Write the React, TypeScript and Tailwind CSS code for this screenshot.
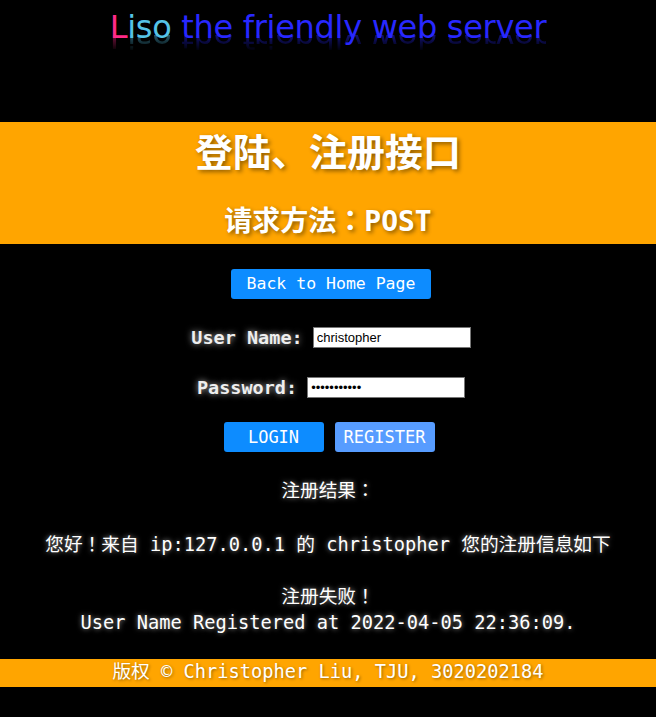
const mono = 'font-["DejaVu_Sans_Mono","Noto_Sans_CJK_JP",monospace]';

function Logo() {
  const text = (
    <>
      <span className="text-[#ff2a88]">L</span>
      <span className="text-[#55c3e6]">iso</span>
      <span className="text-[#2828ff]"> the friendly web server</span>
    </>
  );
  return (
    <div className="flex flex-col items-center pt-[7px] font-['DejaVu_Sans',sans-serif] text-[32px] leading-[40px] tracking-[-0.3px]">
      <div>{text}</div>
      <div
        aria-hidden="true"
        className="-mt-[12px] h-[22px] overflow-hidden -scale-y-100 opacity-45 [mask-image:linear-gradient(to_top,black,transparent_75%)]"
      >
        {text}
      </div>
    </div>
  );
}

export default function App() {
  return (
    <div className={`min-h-[717px] bg-black text-white ${mono}`}>
      <div className="h-[122px]">
        <Logo />
      </div>

      <div className="flex h-[122px] flex-col items-center bg-[#ffa500] font-bold [text-shadow:2px_2px_4px_rgba(0,0,0,0.45)]">
        <div className="mt-[6px] text-[38px] leading-[50px]">登陆、注册接口</div>
        <div className="mt-[24px] text-[28px] leading-[40px]">请求方法：POST</div>
      </div>

      <div className="flex flex-col items-center">
        <button className="mt-[25px] ml-[6px] h-[30px] w-[200px] rounded-[3px] bg-[#0d8cff] text-[16.5px] leading-[30px] text-white">
          Back to Home Page
        </button>

        <div className="mt-[25px] flex items-center gap-[10px] pl-[6px]">
          <span className="text-[18.5px] font-bold text-[#eeeeee] [text-shadow:0_0_6px_rgba(255,255,255,0.7)]">
            User Name:
          </span>
          <input
            defaultValue="christopher"
            className="h-[21px] w-[158px] border border-[#767676] bg-white px-[3px] font-['Liberation_Sans',sans-serif] text-[13px] text-black outline-none"
          />
        </div>

        <div className="mt-[22px] flex items-center gap-[10px] pl-[6px]">
          <span className="text-[18.5px] font-bold text-[#eeeeee] [text-shadow:0_0_6px_rgba(255,255,255,0.7)]">
            Password:
          </span>
          <input
            type="password"
            defaultValue="christopher"
            className="h-[21px] w-[158px] border border-[#767676] bg-white px-[3px] font-['Liberation_Sans',sans-serif] text-[13px] text-black outline-none"
          />
        </div>

        <div className="mt-[20px] ml-[2px] flex gap-[11px]">
          <button className="h-[30px] w-[100px] rounded-[3px] bg-[#0d8cff] text-[17px] leading-[30px] text-white">
            LOGIN
          </button>
          <button className="h-[30px] w-[100px] rounded-[3px] bg-[#579cff] text-[17px] leading-[30px] text-white">
            REGISTER
          </button>
        </div>

        <div className="flex flex-col items-center text-[18.7px] [text-shadow:0_0_5px_rgba(255,255,255,0.6)]">
          <div className="mt-[26px] leading-[26px]">注册结果：</div>
          <div className="mt-[28px] leading-[26px]">
            您好！来自 ip:127.0.0.1 的 christopher 您的注册信息如下
          </div>
          <div className="mt-[26px] leading-[26px]">注册失败！</div>
          <div className="leading-[26px]">User Name Registered at 2022-04-05 22:36:09.</div>
        </div>
      </div>

      <div className="mt-[23px] flex h-[28px] items-center justify-center bg-[#ffa500] text-[18.7px] [text-shadow:1px_1px_3px_rgba(0,0,0,0.4)]">
        版权 © Christopher Liu, TJU, 3020202184
      </div>
    </div>
  );
}
